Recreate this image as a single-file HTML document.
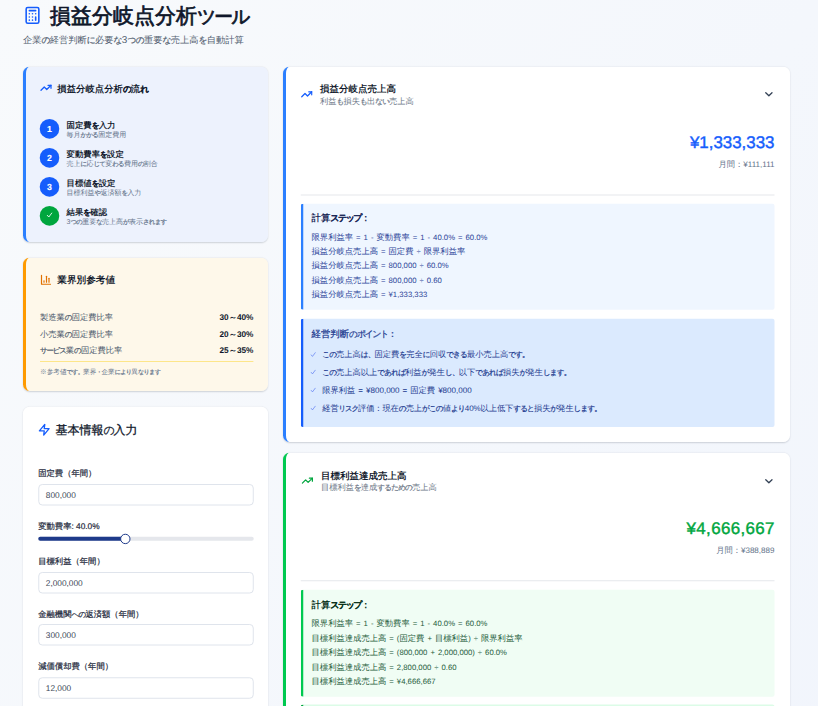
<!DOCTYPE html>
<html lang="ja">
<head>
<meta charset="utf-8">
<title>損益分岐点分析ツール</title>
<style>
*{box-sizing:border-box;margin:0;padding:0}
html,body{width:100%;height:100%;overflow:hidden}
#pg{text-rendering:geometricPrecision;position:absolute;left:0;top:0;width:6544px;height:5648px;overflow:hidden;transform-origin:0 0;transform:scale(0.125)}
body{background:#f5f7fb}
#pg{background:linear-gradient(to bottom right,#f8fafc,#f0f4fc) 0 0/6544px 10160px no-repeat #f5f7fb;font-family:"Liberation Sans",sans-serif;color:#0f172a}
svg{display:block;fill:none;stroke:currentColor;stroke-width:2;stroke-linecap:round;stroke-linejoin:round}
.circ{-webkit-text-stroke:0.96px currentColor}
.htitle{-webkit-text-stroke:5.6px currentColor}
.lab{-webkit-text-stroke:1.6px currentColor}
.amt{-webkit-text-stroke:3.36px currentColor}
/* header */
.hicon{position:absolute;left:184px;top:47.2px;width:152px;height:152px;color:#155dfc}
.htitle{position:absolute;left:400.8px;top:4.8px;height:240px;line-height:240px;font-size:168px;font-weight:400;color:#0f172a;white-space:nowrap}
.hsub{position:absolute;left:184px;top:264px;height:104px;line-height:104px;font-size:74px;color:#525e70;white-space:nowrap}
/* cards */
.card{position:absolute;border-radius:52px;border:0 solid transparent;border-left:24px solid #2b7fff;background:#fff;box-shadow:0 6.4px 16px rgba(15,23,42,.11),0 4px 9.6px rgba(15,23,42,.07)}
.in{position:absolute;left:0;top:10.4px;right:0;bottom:0}
.lc{left:184px;width:1960px}
.rc{left:2264px;width:4056px}
.rc .in{left:6.4px}
#c1{top:533.6px;height:1402.4px;background:#edf2fd}
#c2{top:2061.6px;height:1066.4px;background:#fef8ea;border-left-color:#fe9a00}
#c3{top:3253.6px;height:2560px;border-left:0}
#c3 .in{left:1.6px;right:0}
#r1{top:533.6px;height:3002.4px}
#r2{top:3621.6px;height:2400px;border-left-color:#00c950}
.abs{position:absolute;white-space:nowrap}
/* left card 1 */
.ctitle{font-size:75px;font-weight:700;line-height:96px;color:#0f172a}
.step{position:absolute;left:112px;height:152px}
.circ{position:absolute;left:-2.4px;top:0;width:156.8px;height:156.8px;border-radius:50%;background:#155dfc;color:#fff;font-size:70px;font-weight:700;line-height:156.8px;text-align:center}
.circ.g{background:#00a63e}
.st{position:absolute;left:212px;top:8.8px;font-size:67px;line-height:80px;font-weight:700;white-space:nowrap;color:#0f172a}
.ss{position:absolute;left:212px;top:92px;font-size:56px;line-height:72px;white-space:nowrap;color:#64748b}

/* left card 2 */
.row{position:absolute;left:112px;right:116.8px;height:96px;line-height:96px;font-size:66px;color:#475569;white-space:nowrap}
.row b{position:absolute;right:0;top:0;color:#0f172a;font-weight:700}
/* left card 3 */
.lab{position:absolute;left:120px;font-size:66.5px;font-weight:400;line-height:96px;color:#1e293b;white-space:nowrap}
.inp{position:absolute;left:120px;width:1724px;height:172px;border:8px solid #dfe4ec;border-radius:32px;background:#fff;font-size:66.4px;line-height:156px;padding-left:52.8px;color:#3b4656;white-space:nowrap}
/* right cards */
.rt{position:absolute;left:266.4px;font-size:76px;font-weight:700;line-height:96px;color:#0f172a;white-space:nowrap}
.rs{position:absolute;left:266.4px;font-size:66px;line-height:80px;color:#6b7686;white-space:nowrap}
.amt{position:absolute;right:124px;font-size:135.2px;font-weight:400;line-height:160px;white-space:nowrap}
.mon{position:absolute;right:124px;font-size:66px;line-height:80px;color:#64748b;white-space:nowrap}
.sep{position:absolute;left:112px;right:124px;height:8px;background:#e5e7eb}
.box{position:absolute;left:112px;right:124px;border-left:22.4px solid #2b7fff;background:#eff6ff;border-radius:16px}
.bh{position:absolute;left:64px;font-size:75px;font-weight:700;line-height:96px;white-space:nowrap}
.bl{position:absolute;left:64px;font-size:66.5px;line-height:80px;white-space:nowrap}
.ck{position:absolute;left:54.4px;width:44.8px;height:44.8px;color:#4a6cf0;stroke-width:2.6}
.bt{position:absolute;left:149.6px;font-size:66px;line-height:80px;white-space:nowrap}
.n{font-size:.93em;word-spacing:.11em}
.k{font-size:.92em;letter-spacing:-.11em;-webkit-text-stroke:1.6px currentColor}
.kk{font-size:.9em;letter-spacing:-.15em;-webkit-text-stroke:1.6px currentColor}
.htitle .kk{font-size:.89em;letter-spacing:-.1em;-webkit-text-stroke:6px currentColor}
.bh .kk{font-size:.96em;letter-spacing:-.17em}
.mon .n{font-size:.975em;word-spacing:0}
.lab .n{font-size:1em;word-spacing:0}
.bt .n{font-size:.975em;word-spacing:.1em}
.hsub .k{font-size:.95em;letter-spacing:-.08em}
</style>
</head>
<body>
<div id="pg">
<!-- header -->
<svg class="hicon" viewBox="0 0 24 24"><rect x="4" y="2" width="16" height="20" rx="2"/><line x1="8" y1="6" x2="16" y2="6"/><line x1="16" y1="14" x2="16" y2="18"/><path d="M16 10h.01M12 10h.01M8 10h.01M12 14h.01M8 14h.01M12 18h.01M8 18h.01"/></svg>
<div class="htitle">損益分岐点分析<span class="kk">ツール</span></div>
<div class="hsub">企業<span class="k">の</span>経営判断<span class="k">に</span>必要<span class="k">な</span><span style="font-size:1.08em">3</span><span class="k">つの</span>重要<span class="k">な</span>売上高<span class="k">を</span>自動計算</div>

<!-- LEFT 1 -->
<div class="card lc" id="c1">
<div class="in">  <svg class="abs" style="left:112px;top:110.4px;width:96px;height:96px;color:#155dfc;stroke-width:2.5" viewBox="0 0 24 24"><polyline points="22 7 13.5 15.5 8.5 10.5 2 17"/><polyline points="16 7 22 7 22 13"/></svg>
  <div class="abs ctitle" style="left:250.4px;top:116px">損益分岐点分析<span class="k">の</span>流<span class="k">れ</span></div>
  <div class="step" style="top:408px"><div class="circ">1</div><div class="st">固定費<span class="k">を</span>入力</div><div class="ss">毎月<span class="k">かかる</span>固定費用</div></div>
  <div class="step" style="top:640px"><div class="circ">2</div><div class="st">変動費率<span class="k">を</span>設定</div><div class="ss">売上<span class="k">に</span>応<span class="k">じて</span>変<span class="k">わる</span>費用<span class="k">の</span>割合</div></div>
  <div class="step" style="top:872px"><div class="circ">3</div><div class="st">目標値<span class="k">を</span>設定</div><div class="ss">目標利益<span class="k">や</span>返済額<span class="k">を</span>入力</div></div>
  <div class="step" style="top:1104px"><div class="circ g"><svg style="position:absolute;left:51.2px;top:44.8px;width:54.4px;height:54.4px;stroke-width:3" viewBox="0 0 24 24"><polyline points="4 13 9.5 19 20 5"/></svg></div><div class="st">結果<span class="k">を</span>確認</div><div class="ss">3<span class="k">つの</span>重要<span class="k">な</span>売上高<span class="k">が</span>表示<span class="k">されます</span></div></div></div>
</div>

<!-- LEFT 2 -->
<div class="card lc" id="c2">
<div class="in">  <svg class="abs" style="left:112px;top:118.4px;width:96px;height:96px;color:#e17100;stroke-width:2.4" viewBox="0 0 24 24"><path d="M3 3v18h18"/><path d="M18 17V9"/><path d="M13 17V5"/><path d="M8 17v-3"/></svg>
  <div class="abs ctitle" style="left:250.4px;top:120px;font-size:77px">業界別参考値</div>
  <div class="row" style="top:416px">製造業<span class="k">の</span>固定費比率<b>30～40%</b></div>
  <div class="row" style="top:552px">小売業<span class="k">の</span>固定費比率<b>20～30%</b></div>
  <div class="row" style="top:680px"><span class="kk">サービス</span>業<span class="k">の</span>固定費比率<b>25～35%</b></div>
  <div class="abs" style="left:112px;right:116.8px;top:816px;height:8px;background:#fde68a"></div>
  <div class="abs" style="left:112px;top:864px;font-size:53px;line-height:80px;color:#64748b">※参考値<span class="k">です。</span>業界<span class="kk">・</span>企業<span class="k">により</span>異<span class="k">なります</span></div></div>
</div>
<!-- LEFT 3 -->
<div class="card lc" id="c3">
<div class="in">  <svg class="abs" style="left:116.8px;top:121.6px;width:104px;height:104px;color:#155dfc;stroke-width:2.4" viewBox="0 0 24 24"><polygon points="13 2 3 14 12 14 11 22 21 10 12 10 13 2"/></svg>
  <div class="abs" style="left:257.6px;top:115.2px;font-size:96px;font-weight:400;-webkit-text-stroke:2.24px currentColor;line-height:120px;color:#0f172a">基本情報<span class="k">の</span>入力</div>
  <div class="lab" style="top:472px">固定費（年間）</div>
  <div class="inp" style="top:608px">800,000</div>
  <div class="lab" style="top:896px">変動費率<span class="n">: 40.0%</span></div>
  <div class="abs" style="left:120px;width:1724px;top:1030.4px;height:32px;border-radius:16px;background:#e5e7ec"></div>
  <div class="abs" style="left:120px;width:696px;top:1030.4px;height:32px;border-radius:16px;background:#1e3a8a"></div>
  <div class="abs" style="left:775.6px;top:1006.4px;width:82.4px;height:82.4px;border-radius:50%;background:#fff;border:8.8px solid #1e3a8a"></div>
  <div class="lab" style="top:1176px">目標利益（年間）</div>
  <div class="inp" style="top:1312px">2,000,000</div>
  <div class="lab" style="top:1600px">金融機関<span class="k">への</span>返済額（年間）</div>
  <div class="inp" style="top:1728px;line-height:164px">300,000</div>
  <div class="lab" style="top:2016px">減価償却費（年間）</div>
  <div class="inp" style="top:2153.6px;line-height:164px">12,000</div></div>
</div>
<!-- RIGHT 1 -->
<div class="card rc" id="r1">
<div class="in">  <svg class="abs" style="left:112px;top:162.4px;width:96px;height:96px;color:#155dfc;stroke-width:2.5" viewBox="0 0 24 24"><polyline points="22 7 13.5 15.5 8.5 10.5 2 17"/><polyline points="16 7 22 7 22 13"/></svg>
  <div class="rt" style="top:120px">損益分岐点売上高</div>
  <div class="rs" style="top:224px">利益<span class="k">も</span>損失<span class="k">も</span>出<span class="k">ない</span>売上高</div>
  <svg class="abs" style="left:3806.4px;top:160px;width:100px;height:100px;color:#334155;stroke-width:2.5" viewBox="0 0 24 24"><path d="m6 9 6 6 6-6"/></svg>
  <div class="amt" style="top:512px;color:#155dfc">¥1,333,333</div>
  <div class="mon" style="top:729.6px">月間：<span class="n">¥111,111</span></div>
  <div class="sep" style="top:1012px"></div>
  <div class="box" style="top:1086.4px;height:848px;color:#2a4398">
    <div class="bh" style="top:61.6px;color:#172554">計算<span class="kk">ステップ</span>：</div>
    <div class="bl" style="top:225.6px">限界利益率<span class="n"> = 1 - </span>変動費率<span class="n"> = 1 - 40.0% = 60.0%</span></div>
    <div class="bl" style="top:337.6px">損益分岐点売上高<span class="n"> = </span>固定費<span class="n"> ÷ </span>限界利益率</div>
    <div class="bl" style="top:453.6px">損益分岐点売上高<span class="n"> = 800,000 ÷ 60.0%</span></div>
    <div class="bl" style="top:569.6px">損益分岐点売上高<span class="n"> = 800,000 ÷ 0.60</span></div>
    <div class="bl" style="top:681.6px">損益分岐点売上高<span class="n"> = ¥1,333,333</span></div>
  </div>
  <div class="box" style="top:2006.4px;height:865.6px;background:#dbeafe;border-left-color:#155dfc;color:#1c398e">
    <div class="bh" style="top:73.6px;color:#1c398e;font-weight:400;-webkit-text-stroke:1.92px currentColor">経営判断<span class="k">の</span><span class="kk">ポイント</span>：</div>
    <svg class="ck" style="top:264px" viewBox="0 0 24 24"><polyline points="3 13 9 20 21 4"/></svg><div class="bt" style="top:243.2px"><span class="k">この</span>売上高<span class="k">は、</span>固定費<span class="k">を</span>完全<span class="k">に</span>回収<span class="k">できる</span>最小売上高<span class="k">です。</span></div>
    <svg class="ck" style="top:404px" viewBox="0 0 24 24"><polyline points="3 13 9 20 21 4"/></svg><div class="bt" style="top:383.2px"><span class="k">この</span>売上高以上<span class="k">であれば</span>利益<span class="k">が</span>発生<span class="k">し、</span>以下<span class="k">であれば</span>損失<span class="k">が</span>発生<span class="k">します。</span></div>
    <svg class="ck" style="top:548px" viewBox="0 0 24 24"><polyline points="3 13 9 20 21 4"/></svg><div class="bt" style="top:527.2px">限界利益<span class="n"> = ¥800,000 = </span>固定費<span class="n"> ¥800,000</span></div>
    <svg class="ck" style="top:692px" viewBox="0 0 24 24"><polyline points="3 13 9 20 21 4"/></svg><div class="bt" style="top:671.2px;letter-spacing:-0.8px">経営<span class="kk">リスク</span>評価：現在<span class="k">の</span>売上<span class="k">がこの</span>値<span class="k">より</span><span class="n">40%</span>以上低下<span class="k">すると</span>損失<span class="k">が</span>発生<span class="k">します。</span></div>
  </div></div>
</div>
<!-- RIGHT 2 -->
<div class="card rc" id="r2">
<div class="in">  <svg class="abs" style="left:116.8px;top:164.8px;width:96px;height:96px;color:#00a63e;stroke-width:2.5" viewBox="0 0 24 24"><polyline points="22 7 13.5 15.5 8.5 10.5 2 17"/><polyline points="16 7 22 7 22 13"/></svg>
  <div class="rt" style="top:128px;left:272.8px">目標利益達成売上高</div>
  <div class="rs" style="top:228px;left:272.8px">目標利益<span class="k">を</span>達成<span class="k">するための</span>売上高</div>
  <svg class="abs" style="left:3806.4px;top:168px;width:100px;height:100px;color:#334155;stroke-width:2.5" viewBox="0 0 24 24"><path d="m6 9 6 6 6-6"/></svg>
  <div class="amt" style="top:516.8px;color:#00a63e;letter-spacing:3.04px;margin-right:-3.04px">¥4,666,667</div>
  <div class="mon" style="top:728px">月間：<span class="n">¥388,889</span></div>
  <div class="sep" style="top:1009.6px"></div>
  <div class="box" style="top:2004px;height:800px;background:#dcfce7;border-left-color:#00a63e"></div>
  <div class="box" style="top:1084.8px;height:857.6px;background:#f0fdf4;border-left-color:#00c950;color:#245c3b">
    <div class="bh" style="top:69.6px;color:#052e16">計算<span class="kk">ステップ</span>：</div>
    <div class="bl" style="top:228.8px">限界利益率<span class="n"> = 1 - </span>変動費率<span class="n"> = 1 - 40.0% = 60.0%</span></div>
    <div class="bl" style="top:344.8px">目標利益達成売上高<span class="n"> = (</span>固定費<span class="n"> + </span>目標利益<span class="n">) ÷ </span>限界利益率</div>
    <div class="bl" style="top:460.8px">目標利益達成売上高<span class="n"> = (800,000 + 2,000,000) ÷ 60.0%</span></div>
    <div class="bl" style="top:576.8px">目標利益達成売上高<span class="n"> = 2,800,000 ÷ 0.60</span></div>
    <div class="bl" style="top:688.8px">目標利益達成売上高<span class="n"> = ¥4,666,667</span></div>
  </div></div>
</div>
</div>
</body>
</html>
